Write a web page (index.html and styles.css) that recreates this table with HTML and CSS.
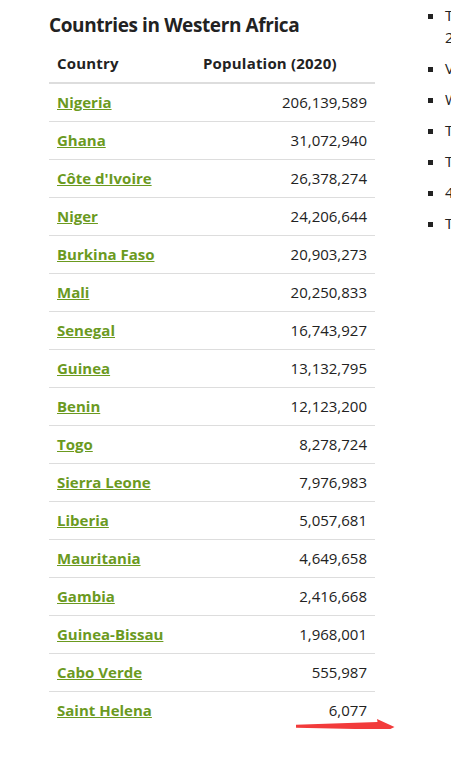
FILE: index.html
```html
<!DOCTYPE html>
<html lang="en">
<head>
<meta charset="utf-8">
<title>Countries in Western Africa</title>
<link rel="stylesheet" href="styles.css">
</head>
<body>
<div class="page">
  <main class="content">
    <h2 class="title">Countries in Western Africa</h2>
    <table class="countries">
      <thead>
        <tr><th class="col-country">Country</th><th class="col-pop">Population (2020)</th></tr>
      </thead>
      <tbody>
        <tr><td><a href="#">Nigeria</a></td><td class="num">206,139,589</td></tr>
        <tr><td><a href="#">Ghana</a></td><td class="num">31,072,940</td></tr>
        <tr><td><a href="#">Côte d'Ivoire</a></td><td class="num">26,378,274</td></tr>
        <tr><td><a href="#">Niger</a></td><td class="num">24,206,644</td></tr>
        <tr><td><a href="#">Burkina Faso</a></td><td class="num">20,903,273</td></tr>
        <tr><td><a href="#">Mali</a></td><td class="num">20,250,833</td></tr>
        <tr><td><a href="#">Senegal</a></td><td class="num">16,743,927</td></tr>
        <tr><td><a href="#">Guinea</a></td><td class="num">13,132,795</td></tr>
        <tr><td><a href="#">Benin</a></td><td class="num">12,123,200</td></tr>
        <tr><td><a href="#">Togo</a></td><td class="num">8,278,724</td></tr>
        <tr><td><a href="#">Sierra Leone</a></td><td class="num">7,976,983</td></tr>
        <tr><td><a href="#">Liberia</a></td><td class="num">5,057,681</td></tr>
        <tr><td><a href="#">Mauritania</a></td><td class="num">4,649,658</td></tr>
        <tr><td><a href="#">Gambia</a></td><td class="num">2,416,668</td></tr>
        <tr><td><a href="#">Guinea-Bissau</a></td><td class="num">1,968,001</td></tr>
        <tr><td><a href="#">Cabo Verde</a></td><td class="num">555,987</td></tr>
        <tr><td><a href="#">Saint Helena</a></td><td class="num">6,077</td></tr>
      </tbody>
    </table>
    <svg class="arrow" width="100" height="20" viewBox="295 717 100 20" aria-hidden="true">
      <polygon points="296,724.7 377.5,722 377,719 394.5,727 377,735.5 377.5,729.5 296,727.7" fill="#f23b3b"/>
    </svg>
  </main>
  <aside class="sidebar">
    <ul class="facts">
      <li>Total population of the region in<br>2020 was over 400 million</li>
      <li>Very diverse cultures and languages</li>
      <li>West African CFA franc is widely used</li>
      <li>The Niger River crosses several countries</li>
      <li>The Sahel lies across the north</li>
      <li>4 countries border the Sahara</li>
      <li>Timbuktu is a historic city in Mali</li>
    </ul>
  </aside>
</div>
</body>
</html>
```

FILE: styles.css
```css
html, body {
  margin: 0;
  padding: 0;
  background: #ffffff;
}

body {
  overflow: hidden;
  font-family: "Open Sans", "Liberation Sans", sans-serif;
  color: #222222;
  font-size: 15px;
}

.page {
  display: flex;
  align-items: flex-start;
  padding-left: 49px;
  width: 700px;
}

.content {
  position: relative;
  width: 326px;
  flex: none;
}

.title {
  margin: 12px 0 7px 0;
  font-size: 19px;
  line-height: 26px;
  font-weight: 700;
  letter-spacing: -0.4px;
  color: #222222;
}

.countries {
  width: 326px;
  border-collapse: collapse;
  font-size: 15px;
  line-height: 21px;
}

.countries th {
  text-align: left;
  font-weight: 700;
  padding: 8px;
  letter-spacing: 0.2px;
  border-bottom: 2px solid #dddddd;
}

.col-country { width: 130px; }
.col-pop { width: 164px; }

.countries td {
  padding: 8px;
  border-bottom: 1px solid #dddddd;
}

.countries tbody tr:last-child td {
  border-bottom: none;
}

.countries a {
  color: #6b9a1f;
  font-weight: 700;
  text-decoration: underline;
}

.countries .num {
  text-align: right;
}

.arrow {
  position: absolute;
  left: 246px;
  top: 717px;
}

.sidebar {
  margin-left: 53px;
  width: 240px;
  flex: none;
}

.facts {
  list-style: none;
  margin: 4px 0 0 0;
  padding: 0;
  font-size: 15px;
  line-height: 22px;
}

.facts li {
  display: flex;
  align-items: flex-start;
  margin-bottom: 9px;
  white-space: nowrap;
}

.facts li::before {
  content: "";
  flex: none;
  width: 5px;
  height: 5px;
  background: #222222;
  margin-top: 10px;
  margin-right: 12px;
}
```
